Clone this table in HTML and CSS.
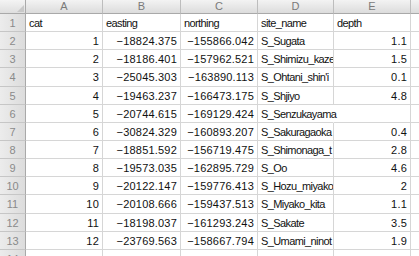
FILE: index.html
```html
<!DOCTYPE html>
<html>
<head>
<meta charset="utf-8">
<link rel="stylesheet" href="styles.css">
</head>
<body>
<div class="sheet">
  <div class="corner"><span class="tri"></span></div>
  <div class="ch">A</div><div class="ch">B</div><div class="ch">C</div><div class="ch">D</div><div class="ch">E</div><div class="ch last"></div>

  <div class="rh">1</div><div class="c">cat</div><div class="c">easting</div><div class="c">northing</div><div class="c">site_name</div><div class="c">depth</div><div class="c f"></div>
  <div class="rh">2</div><div class="c n">1</div><div class="c n">−18824.375</div><div class="c n">−155866.042</div><div class="c">S_Sugata</div><div class="c n">1.1</div><div class="c f"></div>
  <div class="rh">3</div><div class="c n">2</div><div class="c n">−18186.401</div><div class="c n">−157962.521</div><div class="c">S_Shimizu_kaze</div><div class="c n">1.5</div><div class="c f"></div>
  <div class="rh">4</div><div class="c n">3</div><div class="c n">−25045.303</div><div class="c n">−163890.113</div><div class="c">S_Ohtani_shin'i</div><div class="c n">0.1</div><div class="c f"></div>
  <div class="rh">5</div><div class="c n">4</div><div class="c n">−19463.237</div><div class="c n">−166473.175</div><div class="c">S_Shjiyo</div><div class="c n">4.8</div><div class="c f"></div>
  <div class="rh">6</div><div class="c n">5</div><div class="c n">−20744.615</div><div class="c n">−169129.424</div><div class="c spill">S_Senzukayama</div><div class="c"></div><div class="c f"></div>
  <div class="rh">7</div><div class="c n">6</div><div class="c n">−30824.329</div><div class="c n">−160893.207</div><div class="c">S_Sakuragaoka</div><div class="c n">0.4</div><div class="c f"></div>
  <div class="rh">8</div><div class="c n">7</div><div class="c n">−18851.592</div><div class="c n">−156719.475</div><div class="c">S_Shimonaga_t</div><div class="c n">2.8</div><div class="c f"></div>
  <div class="rh">9</div><div class="c n">8</div><div class="c n">−19573.035</div><div class="c n">−162895.729</div><div class="c">S_Oo</div><div class="c n">4.6</div><div class="c f"></div>
  <div class="rh">10</div><div class="c n">9</div><div class="c n">−20122.147</div><div class="c n">−159776.413</div><div class="c">S_Hozu_miyako</div><div class="c n">2</div><div class="c f"></div>
  <div class="rh">11</div><div class="c n">10</div><div class="c n">−20108.666</div><div class="c n">−159437.513</div><div class="c">S_Miyako_kita</div><div class="c n">1.1</div><div class="c f"></div>
  <div class="rh">12</div><div class="c n">11</div><div class="c n">−18198.037</div><div class="c n">−161293.243</div><div class="c">S_Sakate</div><div class="c n">3.5</div><div class="c f"></div>
  <div class="rh">13</div><div class="c n">12</div><div class="c n">−23769.563</div><div class="c n">−158667.794</div><div class="c">S_Umami_ninot</div><div class="c n">1.9</div><div class="c f"></div>
  <div class="rh">14</div><div class="c"></div><div class="c"></div><div class="c"></div><div class="c"></div><div class="c"></div><div class="c f"></div>
</div>
</body>
</html>
```
FILE: styles.css
```css
html, body {
  margin: 0;
  padding: 0;
  background: #ffffff;
  overflow: hidden;
}
.sheet {
  display: grid;
  grid-template-columns: 26px 77px 78px 77px 76px 77px 8px;
  grid-template-rows: 14px repeat(14, 18.15px);
  font-family: "Liberation Sans", "Noto Sans CJK JP", sans-serif;
  font-size: 11px;
  color: #111;
  width: 419px;
}
.corner {
  position: relative;
  background: linear-gradient(#f4f4f4, #dedede);
  border-right: 1px solid #a9a9a9;
  border-bottom: 1px solid #a9a9a9;
  box-sizing: border-box;
}
.tri {
  position: absolute;
  right: 1px;
  bottom: 1px;
  width: 0;
  height: 0;
  border-left: 7px solid transparent;
  border-bottom: 7px solid #c8c8c8;
}
.ch {
  background: linear-gradient(#f3f3f3, #dcdcdc);
  border-right: 1px solid #bdbdbd;
  border-bottom: 1px solid #a9a9a9;
  box-sizing: border-box;
  color: #7a7a7a;
  text-align: center;
  line-height: 13px;
  font-size: 11px;
}
.ch.last {
  border-right: none;
}
.rh {
  background: linear-gradient(90deg, #ececec, #dcdcdc);
  border-right: 1px solid #a9a9a9;
  border-bottom: 1px solid #c6c6c6;
  box-sizing: border-box;
  color: #8a8a8a;
  text-align: center;
  line-height: 18px;
  font-size: 11px;
}
.c {
  border-right: 1px solid #d6d6d6;
  border-bottom: 1px solid #d6d6d6;
  box-sizing: border-box;
  padding: 0 2px 0 3px;
  white-space: nowrap;
  overflow: hidden;
  line-height: 18px;
  background: #fff;
  letter-spacing: -0.6px;
}
.c.f {
  border-right: none;
}
.n {
  text-align: right;
  padding-right: 3px;
  letter-spacing: 0.2px;
}
.spill {
  overflow: visible;
  border-right-color: #fff;
  position: relative;
  z-index: 1;
  background: transparent;
}
.spill + .c {
  background: transparent;
}
```
